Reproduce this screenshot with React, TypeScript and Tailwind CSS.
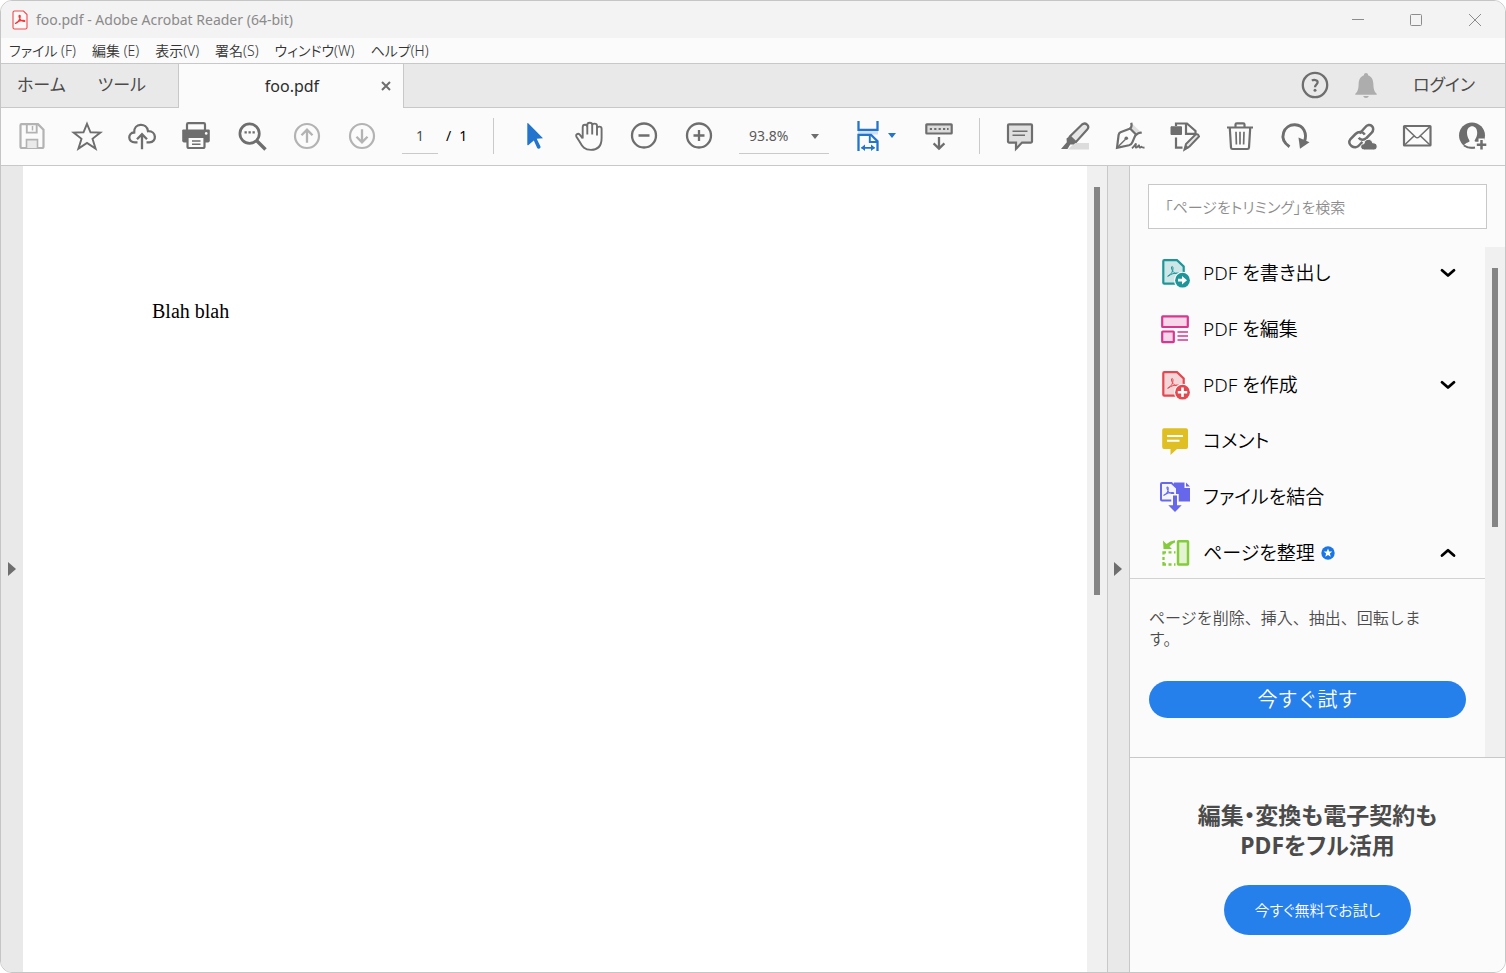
import type { ReactNode } from "react";

type IconProps = { children: ReactNode; className?: string };

function Icon({ children, className = "" }: IconProps) {
  return (
    <svg viewBox="0 0 32 32" fill="none" stroke="currentColor" strokeWidth="2.2" aria-hidden="true" className={`size-8 shrink-0 ${className}`}>
      {children}
    </svg>
  );
}

function ToolButton({ label, muted, active, children }: { label: string; muted?: boolean; active?: boolean; children: ReactNode }) {
  const tone = muted ? "text-[#b3b3b3]" : active ? "text-[#2274cc]" : "text-[#6e6e6e]";
  return (
    <button type="button" aria-label={label} className={`shrink-0 ${tone}`}>
      <Icon>{children}</Icon>
    </button>
  );
}

function Separator() {
  return <div className="h-9 w-px shrink-0 bg-[#cacaca]" />;
}

const acrobatMark =
  "M0 9.500C3 8 5.200 5 5 1.500C4.800 -0.800 3.200 -0.500 3.500 1.500C4 5 7 7.800 10.500 7.800C12 7.800 11.800 6.600 10.300 6.500C6.500 6.300 3 7.600 0.800 9.200C-0.300 10.200 -0.700 9.800 0 9.500Z";

function TitleBar() {
  return (
    <header className="flex h-[37px] shrink-0 items-center justify-between bg-[#f3f3f3] pl-[11px]">
      <div className="flex items-center gap-2">
        <svg viewBox="0 0 16 20" fill="none" aria-hidden="true" className="h-5 w-4">
          <path d="M2.500 1H11.500L15 4.500V17.500Q15 19 13.500 19H2.500Q1 19 1 17.500V2.500Q1 1 2.500 1Z" fill="#fff8f8" stroke="#ef4a4e" strokeWidth="1.100" />
          <path d="M4 13.300C6.300 12.300 8.300 9 8.200 6.200C8.100 4.900 6.900 5.100 7 6.300C7.200 8.900 9.600 11.300 12 11.500C13.300 11.500 12.900 10.400 11.700 10.400C9 10.300 6.400 11.200 4.500 12.600C3.300 13.600 3.100 13.500 4 13.300Z" stroke="#f5373a" strokeWidth="1.200" />
        </svg>
        <h1 className="text-sm leading-5 text-[#8a8a8a]">foo.pdf - Adobe Acrobat Reader (64-bit)</h1>
      </div>
      <div className="flex items-center text-[#8c8c8c]">
        <button type="button" aria-label="最小化" className="flex h-9 w-[58px] items-center justify-center">
          <svg viewBox="0 0 12 12" stroke="currentColor" fill="none" className="size-3"><path d="M0 5.500H12" /></svg>
        </button>
        <button type="button" aria-label="最大化" className="flex h-9 w-[58px] items-center justify-center">
          <svg viewBox="0 0 12 12" stroke="currentColor" fill="none" className="size-3"><rect x=".5" y=".5" width="11" height="11" rx="1" /></svg>
        </button>
        <button type="button" aria-label="閉じる" className="flex h-9 w-[60px] items-center justify-center">
          <svg viewBox="0 0 12 12" stroke="currentColor" fill="none" className="size-3"><path d="M0 0L12 12M12 0L0 12" /></svg>
        </button>
      </div>
    </header>
  );
}

const menus = ["ファイル (F)", "編集 (E)", "表示(V)", "署名(S)", "ウィンドウ(W)", "ヘルプ(H)"];

function MenuBar() {
  return (
    <nav aria-label="メニュー" className="flex h-[26px] shrink-0 items-center gap-4 border-b border-[#c8c8c8] bg-[#fbfbfb] px-2">
      {menus.map((m) => (
        <button key={m} type="button" className="text-sm leading-5 font-[350] whitespace-nowrap text-[#333333]">{m}</button>
      ))}
    </nav>
  );
}

function TabBar() {
  return (
    <div className="flex h-11 shrink-0 items-stretch text-[17px] text-[#4b4b4b]">
      <div className="flex items-center gap-8 border-b border-[#c8c8c8] bg-[#e9e9e9] pr-8 pb-0.5 pl-4 whitespace-nowrap">
        <button type="button">ホーム</button>
        <button type="button">ツール</button>
      </div>
      <div className="flex w-[226px] shrink-0 items-center border-x border-[#c8c8c8] bg-[#fbfbfb] pr-2">
        <button type="button" className="flex-1 pl-7 text-center text-base text-[#2c2c2c]">foo.pdf</button>
        <button type="button" aria-label="タブを閉じる" className="p-1 text-[#6e6e6e]">
          <svg viewBox="0 0 10 10" stroke="currentColor" strokeWidth="2" className="size-2.5"><path d="M1 1L9 9M9 1L1 9" /></svg>
        </button>
      </div>
      <div className="flex flex-1 items-center justify-end border-b border-[#c8c8c8] bg-[#e9e9e9] pr-[30px] pb-0.5">
        <button type="button" aria-label="ヘルプ" className="mr-[19px] text-[#6e6e6e]">
          <Icon>
            <circle cx="16" cy="16" r="12.200" strokeWidth="2.300" />
            <path d="M12.900 11.700C14.500 10.500 18.600 10.600 18.600 13.200C18.600 15.400 16 15.600 16 18.300" strokeWidth="2.300" />
            <circle cx="16" cy="21.300" r="1.500" fill="currentColor" stroke="none" />
          </Icon>
        </button>
        <button type="button" aria-label="通知" className="mr-[31px] text-[#adadad]">
          <Icon>
            <path d="M5.300 25.800V24.800C7.500 22.800 8.500 20.500 8.600 15.500C8.700 10.500 10.800 7.300 14 6.300V5.500Q14 4 16 4Q18 4 18 5.500V6.300C21.200 7.300 23.300 10.500 23.400 15.500C23.500 20.500 24.500 22.800 26.700 24.800V25.800ZM13.200 27H18.800C18.300 29.600 13.700 29.600 13.200 27Z" fill="currentColor" stroke="none" />
          </Icon>
        </button>
        <button type="button" className="whitespace-nowrap">ログイン</button>
      </div>
    </div>
  );
}

function Toolbar() {
  return (
    <div role="toolbar" aria-label="ツールバー" className="flex h-[58px] shrink-0 items-center border-b border-[#c8c8c8] bg-[#fbfbfb] pr-[17px] pb-0.5 pl-[15px]">
      <div className="flex gap-[23px]">
        <ToolButton label="保存" muted>
          <path d="M5.500 4.200H22L27.500 9.700V26.500Q27.500 28 26 28H6Q4.500 28 4.500 26.500V5.200Q4.500 4.200 5.500 4.200Z" />
          <path d="M10.800 4.500V12.600H20.700V4.500" strokeWidth="1.900" />
          <path d="M10.500 28V19.600H21.500V28" strokeWidth="1.600" fill="#eaeaea" />
          <path d="M16.500 6V10.500" strokeWidth="1.500" />
        </ToolButton>
        <ToolButton label="お気に入り">
          <path d="M16 3.800L19.500 12.300L29.400 12.600L21.500 18.800L24.600 28.600L16 22.900L7.400 28.600L10.500 18.800L2.600 12.600L12.500 12.300Z" strokeWidth="1.900" />
        </ToolButton>
        <ToolButton label="アップロード">
          <path d="M11.500 22.300H9C1.500 22.300 1.500 12.800 8.200 12.500C7.500 3 20.800 2.200 22 11.200C30.800 10.800 31 22.300 23.500 22.300H20.500" strokeWidth="2.300" />
          <path d="M16 29.300V15M11 19.200L16 14.200L21 19.200" strokeWidth="2.300" />
        </ToolButton>
        <ToolButton label="印刷">
          <path d="M6 10V4.500Q6 3.200 7.300 3.200H22.700Q24 3.200 24 4.500V10" />
          <path d="M2.300 9.500H27.700Q28.800 9.500 28.800 10.600V20.500Q28.800 22.500 27 22.500H3Q1.200 22.500 1.200 20.500V10.600Q1.200 9.500 2.300 9.500Z" fill="currentColor" stroke="none" />
          <path d="M6.500 17H23.500V26.500Q23.500 28 22 28H8Q6.500 28 6.500 26.500Z" fill="#fbfbfb" />
          <path d="M11 21H19.500M11 24.300H19.500" strokeWidth="1.500" />
          <circle cx="25.200" cy="13.400" r="1.300" fill="#fbfbfb" stroke="none" />
        </ToolButton>
        <ToolButton label="検索">
          <circle cx="13.600" cy="13.600" r="9.700" strokeWidth="2.700" />
          <path d="M21 21L29.500 29.500" strokeWidth="3.300" />
          <path d="M8.500 12.400H10.800M12.500 12.400H14.800M16.500 12.400H18.800" strokeWidth="2.300" />
        </ToolButton>
        <ToolButton label="前のページ" muted>
          <circle cx="16" cy="16" r="12" />
          <path d="M16 22.700V10.500M10.500 15.200L16 9.700L21.500 15.200" strokeWidth="2.300" />
        </ToolButton>
        <ToolButton label="次のページ" muted>
          <circle cx="16" cy="16" r="12" />
          <path d="M16 9.300V21.500M10.500 16.800L16 22.300L21.500 16.800" strokeWidth="2.300" />
        </ToolButton>
      </div>

      <div className="ml-6 flex w-[91px] shrink-0 items-center gap-2 text-sm">
        <input aria-label="ページ番号" defaultValue="1" className="h-9 w-9 border-b border-[#cacaca] bg-transparent text-center text-[#4b4b4b] outline-none" />
        <span className="flex gap-2 text-black"><span>/</span><span>1</span></span>
      </div>
      <Separator />

      <div className="ml-6 flex gap-[23px]">
        <ToolButton label="選択" active>
          <path d="M9.300 3.800Q9.200 2.500 10.200 3.300L25 18.200L18.700 18.800L22.500 26.500Q22.900 28 21.500 28.600Q19.900 29.200 19.200 28L15.800 20.500L10.500 25Q9.300 25.800 9.300 24.500Z" fill="currentColor" stroke="none" />
        </ToolButton>
        <ToolButton label="手のひら">
          <path d="M9.700 18.500V7.200Q9.700 4.800 12 4.800Q14.300 4.800 14.300 7.200V14.500M14.300 14V5Q14.300 2.800 16.700 2.800Q19.200 2.800 19.200 5V14.500M19.200 14V5.600Q19.200 3.600 21.500 3.600Q24 3.600 24 5.800V15.500M24 15V8.400Q24 6.600 26.400 6.600Q28.600 6.600 28.600 8.800V18C28.600 26 24.500 29.900 18 29.900C11.500 29.900 9.500 27 6.800 22L3.300 16.500C2.400 14.500 5 12.700 6.800 14.600L9.700 18.500" strokeWidth="1.900" />
        </ToolButton>
        <ToolButton label="縮小">
          <circle cx="16" cy="15.500" r="12" strokeWidth="2.300" />
          <path d="M10.500 15.500H21.500" strokeWidth="2.300" />
        </ToolButton>
        <ToolButton label="拡大">
          <circle cx="16" cy="15.500" r="12" strokeWidth="2.300" />
          <path d="M10.500 15.500H21.500M16 10V21" strokeWidth="2.300" />
        </ToolButton>
      </div>

      <div className="relative ml-6 shrink-0">
        <select aria-label="ズーム倍率" defaultValue="93.8%" className="h-9 w-[90px] appearance-none border-b border-[#cacaca] bg-transparent pt-0.5 pl-2.5 text-sm text-[#5a5a5a] outline-none">
          <option>93.8%</option>
          <option>100%</option>
          <option>125%</option>
        </select>
        <svg viewBox="0 0 8 5" aria-hidden="true" className="pointer-events-none absolute top-4 right-2.5 h-[5px] w-2 fill-[#6e6e6e]"><path d="M0 0H8L4 5Z" /></svg>
      </div>
      <button type="button" aria-label="ページ幅に合わせる" className="ml-[27px] flex shrink-0 items-center gap-2 text-[#2274cc]">
        <svg viewBox="0 0 24 32" fill="none" stroke="currentColor" strokeWidth="2.300" className="h-8 w-6">
          <rect x="2" y="11" width="20" height="3.500" fill="#cfe0f3" stroke="none" />
          <path d="M2.500 1V9.800H21.500V1" />
          <path d="M2.500 31V14.800H15L21.500 21.300V31" />
          <path d="M13.800 15V22H21" strokeWidth="1.900" />
          <path d="M5.500 27.800H18.500" strokeWidth="1.700" />
          <path d="M5 27.800L9 24.600V31ZM19 27.800L15 24.600V31Z" fill="currentColor" stroke="none" />
        </svg>
        <svg viewBox="0 0 8 5" className="mr-px h-[5px] w-2 fill-current"><path d="M0 0H8L4 5Z" /></svg>
      </button>
      <div className="mr-6 ml-[26px] flex">
        <ToolButton label="ツールバーを表示">
          <rect x="3.300" y="4.300" width="25.400" height="9.200" rx=".5" fill="#dcdcdc" />
          <path d="M6.800 9H9M11.200 9H13.400M15.600 9H17.800M20 9H22.200M24 9H25.600" strokeWidth="2" />
          <path d="M16 17V28.500M10.600 23.400L16 28.600L21.400 23.400" strokeWidth="2.300" />
        </ToolButton>
      </div>
      <Separator />

      <div className="ml-6 flex gap-[23px]">
        <ToolButton label="コメント">
          <path d="M5 4.300H27Q28 4.300 28 5.300V21.600Q28 22.600 27 22.600H18L12 28.800V22.600H5Q4 22.600 4 21.600V5.300Q4 4.300 5 4.300Z" fill="#dfdfdf" />
          <path d="M8.500 11.200H23.500M8.500 15.300H21" strokeWidth="1.500" />
        </ToolButton>
        <ToolButton label="ハイライト">
          <path d="M9 29.500L15.500 23H30V29.500Z" fill="#dcdcdc" stroke="none" />
          <path d="M10.800 16.500L22.800 4.700C26.500 1.500 31.300 6 28.200 9.600L17 22L12 21.800Z" fill="#e6e6e6" />
          <path d="M7.500 18.500L11.500 15.500L18 21.800L14.500 24.600L11.200 24.500L8.500 29L2 29L7.800 22.300Z" fill="currentColor" stroke="none" />
        </ToolButton>
        <ToolButton label="署名">
          <path d="M18 3.500L27.500 12.800L22.500 15L15.800 8.500Z" fill="#dfdfdf" stroke="none" />
          <path d="M16.300 8.500L6.500 12.300Q5 13 4.600 15L3 27.800L15 25.300Q17.300 24.700 18.300 22.300L21.500 15" />
          <path d="M15.300 7.700L23 15.500M16.300 8.500Q18.200 6.500 17.300 2.700M22 15Q24.500 12.300 27.700 12.800" />
          <path d="M3.500 27.300L11.500 19.300" strokeWidth="1.500" />
          <circle cx="12.300" cy="18.300" r="1.800" fill="currentColor" stroke="none" />
          <path d="M18 28.300C20 26.500 21.500 24.500 22 23.500C22 25 21 27.500 22 27.700C23 27.700 24.500 25.500 25 25.300C25.500 25.500 24.800 27.500 25.800 27.700C26.500 27.700 27 26.500 27.700 26.800C28 27.800 29.500 27.700 30.500 27.500" strokeWidth="1.800" />
        </ToolButton>
        <ToolButton label="ページ編集">
          <path d="M2 6.800H12.500V14.500H2Z" fill="currentColor" stroke="currentColor" strokeWidth="1" />
          <path d="M7 6V3.500H18L26.500 11V13.800H17V3.500M7 17.500V27.600H13.500" />
          <path d="M15.500 29.500L17 24L26.500 14.500Q29 13.300 30 16.500L20.500 26.500Z" fill="#e6e6e6" strokeWidth="2" />
          <path d="M15 30L17 25L20 28Z" fill="currentColor" stroke="none" />
        </ToolButton>
        <ToolButton label="削除">
          <path d="M3 7.500H29M11.500 7V4.500Q11.500 3.300 12.700 3.300H19.300Q20.500 3.300 20.500 4.500V7M5.800 8L7 27.500Q7.100 29 8.600 29H23.400Q24.900 29 25 27.500L26.200 8" />
          <path d="M12 11.800L12.400 24.500M16 11.800V24.500M20 11.800L19.600 24.500" strokeWidth="1.700" />
        </ToolButton>
        <ToolButton label="回転">
          <path d="M10.500 26.700C-1.500 18.500 5 4.200 16 4.800C25 5.300 28.200 13.500 25.500 21.500" strokeWidth="2.900" />
          <path d="M19.500 17.500L21 28.800L30.500 22.300Z" fill="currentColor" stroke="none" />
        </ToolButton>
      </div>

      <div className="ml-auto flex gap-[23px] pl-6">
        <ToolButton label="リンクを共有">
          <path d="M13.500 13.500L19 7.500C23.500 1.500 30.500 7.500 25.500 13L20.500 18C18 20.300 14.500 20.300 12.700 17.800" strokeWidth="2.500" />
          <path d="M16.500 22L13.500 25C9 30.500 0 24.500 4.500 19L9.500 14C12.500 11 17 11.500 18.800 14.700" strokeWidth="2.500" />
          <path d="M18.500 30C13.500 30 13.500 23.800 18 23.700C18.500 18.300 25.500 17.800 26.600 22.800C32.500 22.500 32.500 30 27.500 30Z" fill="currentColor" stroke="#fbfbfb" strokeWidth="1" />
        </ToolButton>
        <ToolButton label="メール">
          <rect x="3" y="6" width="26.500" height="19.500" rx=".5" />
          <path d="M3.500 6.500L14.500 17Q16.200 18.500 18 17L29 6.500M3.500 25L13 16M29 25L19.500 16" strokeWidth="1.600" />
        </ToolButton>
        <ToolButton label="アカウントを追加">
          <circle cx="16" cy="15.500" r="13" fill="currentColor" stroke="none" />
          <path d="M8 25.500C9 22.700 13 22.600 13.500 21.200C13.800 20 11 18 11 12.500C11 4 21.200 4 21.200 12.500C21.200 18 18.300 19.500 18.700 21.200L23 23.500V28Q16 29 8 25.500Z" fill="#fbfbfb" stroke="none" />
          <path d="M25.500 18.500V30M19.800 24.700H31" stroke="#fbfbfb" strokeWidth="6" />
          <path d="M25.500 20V29.500M20.800 24.700H30.300" strokeWidth="2.500" />
          <path d="M8 25.500Q13 28.800 19 27.500" strokeWidth="2" />
        </ToolButton>
      </div>
    </div>
  );
}

function PdfPageIcon({ tint, children }: { tint: string; children: ReactNode }) {
  return (
    <Icon className={tint}>
      <path d="M5.300 3.200H18L24.700 9.500V26.700H5.300Q4.300 26.700 4.300 25.700V4.200Q4.300 3.200 5.300 3.200Z" fill="currentColor" fillOpacity=".2" />
      <g transform="translate(9 9.500)"><path d={acrobatMark} strokeWidth="1" /></g>
      <circle cx="23.500" cy="23.200" r="8.500" fill="#fbfbfb" stroke="none" />
      <circle cx="23.500" cy="23.200" r="7.400" fill="currentColor" stroke="none" />
      {children}
    </Icon>
  );
}

const tools: { name: string; icon: ReactNode; chevron?: "down" | "up"; starred?: boolean }[] = [
  {
    name: "PDF を書き出し",
    chevron: "down",
    icon: (
      <PdfPageIcon tint="text-[#1d9699]">
        <path d="M19 21.800H23V19L28 23.200L23 27.400V24.600H19Z" fill="#fff" stroke="none" />
      </PdfPageIcon>
    ),
  },
  {
    name: "PDF を編集",
    icon: (
      <Icon className="text-[#d83790]">
        <rect x="3.200" y="3.400" width="25.600" height="10.600" rx=".5" fill="#f7d7e9" />
        <rect x="3.200" y="18.500" width="11.600" height="10.600" rx=".5" fill="#f7d7e9" />
        <path d="M18.500 19H29M18.500 23H29M18.500 27H29" strokeWidth="1.400" />
      </Icon>
    ),
  },
  {
    name: "PDF を作成",
    chevron: "down",
    icon: (
      <PdfPageIcon tint="text-[#e34850]">
        <path d="M23.500 18.500V28M18.800 23.200H28.200" stroke="#fff" strokeWidth="2.600" />
      </PdfPageIcon>
    ),
  },
  {
    name: "コメント",
    icon: (
      <Icon className="text-[#dfbf22]">
        <path d="M5 3.200H27Q29 3.200 29 5.200V22Q29 24 27 24H18L11.500 30V24H5Q3.200 24 3.200 22V5.200Q3.200 3.200 5 3.200Z" fill="currentColor" stroke="none" />
        <path d="M8 11H24M8 15.800H20.500" stroke="#fff" strokeWidth="2" />
      </Icon>
    ),
  },
  {
    name: "ファイルを結合",
    icon: (
      <Icon className="text-[#6767ec]">
        <path d="M15 1.500H25.500V7H31V20.500H15Z" fill="currentColor" stroke="none" />
        <path d="M27 1.500L31 5.500H27Z" fill="currentColor" stroke="none" />
        <path d="M3 2H12.500L18 7V17H14V19.500H3Q2 19.500 2 18.500V3Q2 2 3 2Z" fill="#f4f4fd" strokeWidth="2" />
        <g transform="translate(5 6) scale(.85)"><path d={acrobatMark} strokeWidth="1.200" /></g>
        <path d="M12.300 13H19.700V22.500H24.500L16 32L7.500 22.500H12.300Z" fill="#fbfbfb" stroke="none" />
        <path d="M14 14.500H18V24.300H22.700L16 31L9.300 24.300H14Z" fill="currentColor" stroke="none" />
      </Icon>
    ),
  },
  {
    name: "ページを整理",
    chevron: "up",
    starred: true,
    icon: (
      <Icon className="text-[#84cc3c]">
        <rect x="19" y="4.200" width="10" height="23.200" rx=".5" fill="#e4f4d3" strokeWidth="2.500" />
        <path d="M4 3.500L4.500 12H13L10.500 9.500Q13 6.500 16 5.500V3.300Q11 4 7.500 7Z" fill="currentColor" stroke="none" />
        <path d="M4.500 17.500V15.300H7M9.500 15.300H12.500M15 15.300H16.500M4.500 20V23M4.500 25V27.500H7M9.500 27.500H12.500M15 27.500H16.500" strokeWidth="2.300" />
      </Icon>
    ),
  },
];

function ToolRow({ name, icon, chevron, starred }: (typeof tools)[number]) {
  return (
    <li>
      <button type="button" className="flex h-[50px] w-full items-center px-[11px] text-left text-black">
        {icon}
        <span className="ml-3 text-[19px] leading-7 font-[350] whitespace-nowrap">{name}</span>
        {starred && (
          <svg viewBox="0 0 14 14" aria-hidden="true" className="ml-1.5 size-3.5">
            <circle cx="7" cy="7" r="6.700" fill="#1976e6" />
            <path d="M7 2.500L8.200 5.400L11.300 5.600L8.900 7.600L9.700 10.700L7 9L4.300 10.700L5.100 7.600L2.700 5.600L5.800 5.400Z" fill="#fff" />
          </svg>
        )}
        {chevron && (
          <svg viewBox="0 0 16 10" fill="none" stroke="currentColor" strokeWidth="2.800" strokeLinecap="round" strokeLinejoin="round" className="ml-auto h-2.5 w-4">
            <path d={chevron === "down" ? "M2 2.300L8 7.500L14 2.300" : "M2 7.500L8 2.300L14 7.500"} />
          </svg>
        )}
      </button>
    </li>
  );
}

function Sidebar() {
  return (
    <aside className="flex w-[376px] shrink-0 flex-col border-l border-[#c8c8c8] bg-[#fbfbfb]">
      <div className="p-[18px]">
        <input type="search" aria-label="ツールを検索" placeholder="「ページをトリミング」を検索" className="h-[45px] w-full border border-[#c8c8c8] bg-white px-4 text-[15px] font-[350] text-black outline-none placeholder:text-[#8c8c8c]" />
      </div>
      <div className="flex min-h-0 flex-1">
        <div className="min-w-0 flex-1 overflow-hidden">
          <ul className="flex flex-col gap-1.5 px-[18px] pt-px">
            {tools.map((t) => (
              <ToolRow key={t.name} {...t} />
            ))}
          </ul>
          <div className="border-t border-[#d2d2d2] px-[19px] pt-[29px]">
            <p className="max-w-[286px] text-base leading-[21px] font-[350] text-[#4b4b4b] [font-feature-settings:normal]">ページを削除、挿入、抽出、回転します。</p>
            <button type="button" className="mt-[31px] h-[37px] w-full rounded-full bg-[#2680eb] text-xl font-[350] text-white [font-feature-settings:normal]">今すぐ試す</button>
          </div>
        </div>
        <div className="flex w-5 shrink-0 justify-center bg-[#f0f0f0] pt-[21px]">
          <div className="h-[53%] w-1.5 bg-[#858585]" />
        </div>
      </div>
      <section className="flex flex-col items-center border-t border-[#c8c8c8] pt-[42px] pb-[37px]">
        <h2 className="text-center text-[23px] leading-[30px] font-bold text-[#4b4b4b]">
          編集・変換も電子契約も
          <br />
          PDFをフル活用
        </h2>
        <button type="button" className="mt-[25px] h-[50px] w-[187px] rounded-full bg-[#2680eb] text-[15px] font-[350] text-white">今すぐ無料でお試し</button>
      </section>
    </aside>
  );
}

function PanelHandle({ label, className = "" }: { label: string; className?: string }) {
  return (
    <button type="button" aria-label={label} className={`flex w-[22px] shrink-0 items-center justify-center bg-[#e9e9e9] ${className}`}>
      <svg viewBox="0 0 8 14" className="h-3.5 w-2 fill-[#6e6e6e]"><path d="M0 0L8 7L0 14Z" /></svg>
    </button>
  );
}

export default function App() {
  return (
    <div className="flex h-screen flex-col overflow-hidden rounded-xl border border-[#c5c5c5] bg-white font-['Noto_Sans','Noto_Sans_CJK_JP',sans-serif] [font-feature-settings:'palt']">
      <TitleBar />
      <MenuBar />
      <TabBar />
      <Toolbar />
      <div className="flex min-h-0 flex-1">
        <PanelHandle label="左パネルを開く" />
        <main className="min-w-0 flex-1 overflow-hidden bg-white px-[129px] pt-[133px]">
          <p className="font-['Liberation_Serif',serif] text-xl leading-6 text-black">Blah blah</p>
        </main>
        <div className="flex w-5 shrink-0 justify-center bg-[#f0f0f0] pt-[21px]">
          <div className="h-[52%] w-1.5 bg-[#858585]" />
        </div>
        <PanelHandle label="右パネルを閉じる" className="border-l border-[#c8c8c8] pr-0.5" />
        <Sidebar />
      </div>
    </div>
  );
}
